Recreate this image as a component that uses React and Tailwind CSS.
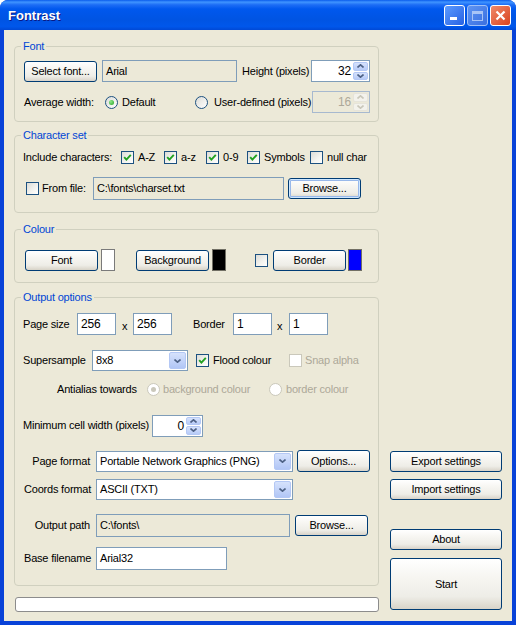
import React from "react";

const BTN =
  "flex items-center justify-center shrink-0 border border-[#003C74] rounded-[3px] bg-[linear-gradient(180deg,#FFFFFF_0%,#F7F6F2_35%,#EEEDE7_75%,#D8D3C8_100%)] text-black";

function Btn({ className = "", focus, children }) {
  return (
    <div className={`${BTN} ${focus ? "shadow-[inset_0_0_0_1px_#CEE7FF,inset_0_0_0_2px_#98B8EA]" : ""} ${className}`}>
      {children}
    </div>
  );
}

function Check({ on, disabled }) {
  return (
    <span
      className={
        disabled
          ? "w-[13px] h-[13px] shrink-0 border border-[#CAC8BB] bg-white"
          : "w-[13px] h-[13px] shrink-0 border border-[#1C5180] bg-[linear-gradient(135deg,#DCDCD7_0%,#F4F4F0_60%,#FFFFFF_100%)] flex items-center justify-center"
      }
    >
      {on && (
        <svg width="9" height="9" viewBox="0 0 9 9">
          <path d="M1.2 4.2 L3.4 6.6 L7.8 1.8" stroke="#21A121" strokeWidth="1.9" fill="none" />
        </svg>
      )}
    </span>
  );
}

function Radio({ on, disabled }) {
  return (
    <span
      className={
        disabled
          ? "w-[13px] h-[13px] shrink-0 rounded-full border border-[#CAC8BB] bg-white flex items-center justify-center"
          : "w-[13px] h-[13px] shrink-0 rounded-full border border-[#1C5180] bg-[linear-gradient(135deg,#DCDCD7_0%,#FFFFFF_100%)] flex items-center justify-center"
      }
    >
      {on && (
        <span
          className={
            disabled
              ? "w-[5px] h-[5px] rounded-full bg-[#CAC8BB]"
              : "w-[5px] h-[5px] rounded-full bg-[radial-gradient(circle_at_35%_35%,#8FE88B,#21A121)]"
          }
        />
      )}
    </span>
  );
}

function Arrow({ up, color = "#4D6185" }) {
  return (
    <svg width="7" height="4" viewBox="0 0 7 4">
      <path d={up ? "M0.5 3.5 L3.5 0.8 L6.5 3.5" : "M0.5 0.5 L3.5 3.2 L6.5 0.5"} stroke={color} strokeWidth="1.6" fill="none" />
    </svg>
  );
}

function Spin({ value, className = "", disabled }) {
  return (
    <div
      className={`h-[22px] shrink-0 border flex ${
        disabled ? "border-[#A7B9CF] bg-[#ECE9D8] text-[#ACA899]" : "border-[#7F9DB9] bg-white"
      } ${className}`}
    >
      <div className="flex-1 flex items-center justify-end pr-[2px] text-[12px]">{value}</div>
      <div className="w-[16px] flex flex-col gap-[1px] py-[1px] pr-[1px]">
        {[true, false].map((up) => (
          <div
            key={String(up)}
            className={
              disabled
                ? "flex-1 rounded-[2px] bg-[#F3F2EC] border border-[#E6E4DA] flex items-center justify-center"
                : "flex-1 rounded-[2px] bg-[linear-gradient(180deg,#D6E2FC,#B7CBF7)] border border-[#B4C8F5] flex items-center justify-center"
            }
          >
            <Arrow up={up} color={disabled ? "#C9C7BA" : "#4D6185"} />
          </div>
        ))}
      </div>
    </div>
  );
}

function Combo({ value, className = "" }) {
  return (
    <div className={`h-[21px] shrink-0 border border-[#7F9DB9] bg-white flex items-center ${className}`}>
      <span className="flex-1 pl-[3px]">{value}</span>
      <div className="w-[17px] h-[17px] mr-[1px] rounded-[2px] border border-[#B4C8F5] bg-[linear-gradient(180deg,#D6E2FC,#B1C6F6)] flex items-center justify-center">
        <Arrow />
      </div>
    </div>
  );
}

function Box({ children, className = "", grey }) {
  return (
    <div
      className={`shrink-0 border border-[#7F9DB9] flex items-center pl-[3px] ${
        grey ? "bg-[#ECE9D8]" : "bg-white"
      } ${className}`}
    >
      {children}
    </div>
  );
}

function Group({ title, className = "", children }) {
  return (
    <fieldset className={`border border-[#D0D0BF] rounded-[4px] ${className}`}>
      <legend className="ml-[6px] px-[2px] leading-[13px] text-[#0046D5]">{title}</legend>
      {children}
    </fieldset>
  );
}

function TitleBar() {
  return (
    <div className="h-[30px] shrink-0 flex items-center pl-[8px] pr-[5px] pt-[1px] tracking-normal bg-[linear-gradient(180deg,#0A5CEC_0%,#3F94FF_7%,#1D6DF5_16%,#0058EE_30%,#0054E3_65%,#0057EB_88%,#0049D6_100%)]">
      <span className="flex-1 text-white font-bold text-[13px] [text-shadow:1px_1px_0_#0A1883]">Fontrast</span>
      <div className="flex gap-[2px]">
        <div className="w-[21px] h-[21px] rounded-[3px] border border-white bg-[linear-gradient(135deg,#5B9BFF,#2761E3)] flex items-end pl-[5px] pb-[5px]">
          <span className="w-[7px] h-[3px] bg-white" />
        </div>
        <div className="w-[21px] h-[21px] rounded-[3px] border border-[#9FC0F8] bg-[linear-gradient(135deg,#5E94F2,#3A6FE0)] flex items-center justify-center">
          <span className="w-[11px] h-[10px] border border-[#A8C4F6] border-t-[3px]" />
        </div>
        <div className="w-[21px] h-[21px] rounded-[3px] border border-white bg-[linear-gradient(135deg,#F08A6A,#D8431F)] flex items-center justify-center">
          <svg width="11" height="11" viewBox="0 0 11 11">
            <path d="M1.5 1.5 L9.5 9.5 M9.5 1.5 L1.5 9.5" stroke="white" strokeWidth="2.2" />
          </svg>
        </div>
      </div>
    </div>
  );
}

export default function App() {
  return (
    <div className="w-[516px] h-[625px] flex flex-col bg-[#0842D8] rounded-t-[8px] overflow-hidden whitespace-nowrap font-['Liberation_Sans',Arial,sans-serif] text-[11px] tracking-[-0.2px] text-black">
      <TitleBar />
      <div className="flex-1 mx-[4px] mb-[4px] bg-[#ECE9D8] flex px-[10px]">
        <div className="w-[365px] flex flex-col">
          <Group title="Font" className="mt-[10px] pb-[8px]">
            <div className="pl-[9px] pt-[7px]">
              <div className="flex items-center h-[22px]">
                <Btn className="w-[73px] h-[21px]">Select font...</Btn>
                <Box grey className="ml-[5px] w-[135px] h-[22px]">Arial</Box>
                <span className="ml-[5px] w-[69px] shrink-0">Height (pixels)</span>
                <Spin value="32" className="w-[59px]" />
              </div>
              <div className="flex items-center h-[22px] mt-[9px]">
                <span className="w-[81px] shrink-0">Average width:</span>
                <Radio on />
                <span className="pl-[4px] w-[77px] shrink-0">Default</span>
                <Radio />
                <span className="pl-[6px] w-[104px] shrink-0">User-defined (pixels)</span>
                <Spin value="16" disabled className="w-[58px]" />
              </div>
            </div>
          </Group>

          <Group title="Character set" className="mt-[7px] pb-[12px]">
            <div className="pl-[9px] pt-[7px]">
              <div className="flex items-center h-[16px]">
                <span className="w-[98px] shrink-0 -ml-[1px]">Include characters:</span>
                <Check on />
                <span className="pl-[4px] w-[30px] shrink-0">A-Z</span>
                <Check on />
                <span className="pl-[4px] w-[29px] shrink-0">a-z</span>
                <Check on />
                <span className="pl-[4px] w-[28px] shrink-0">0-9</span>
                <Check on />
                <span className="pl-[4px] w-[50px] shrink-0">Symbols</span>
                <Check />
                <span className="pl-[4px]">null char</span>
              </div>
              <div className="flex items-center h-[23px] mt-[12px]">
                <span className="ml-[2px]">
                  <Check />
                </span>
                <span className="pl-[3px] w-[54px] shrink-0">From file:</span>
                <Box grey className="w-[191px] h-[23px]">C:\fonts\charset.txt</Box>
                <Btn focus className="ml-[4px] w-[73px] h-[21px]">Browse...</Btn>
              </div>
            </div>
          </Group>

          <Group title="Colour" className="mt-[10px] pb-[11px]">
            <div className="pl-[10px] pt-[13px] flex items-center h-[35px]">
              <Btn className="w-[73px] h-[21px]">Font</Btn>
              <span className="ml-[3px] w-[14px] h-[22px] border border-[#7A7A7A] bg-white" />
              <Btn className="ml-[21px] w-[73px] h-[21px]">Background</Btn>
              <span className="ml-[3px] w-[14px] h-[22px] border border-[#716F64] bg-black" />
              <span className="ml-[29px]">
                <Check />
              </span>
              <Btn className="ml-[5px] w-[73px] h-[21px]">Border</Btn>
              <span className="ml-[2px] w-[14px] h-[22px] border border-[#716F64] bg-[#0000FF]" />
            </div>
          </Group>

          <Group title="Output options" className="mt-[8px] pb-[15px]">
            <div className="pl-[9px] pt-[9px]">
              <div className="flex items-center h-[22px]">
                <span className="w-[54px] shrink-0 -ml-[1px]">Page size</span>
                <Box className="w-[39px] h-[22px] text-[12px]">256</Box>
                <span className="w-[17px] shrink-0 pl-[6px] pt-[4px]">x</span>
                <Box className="w-[39px] h-[22px] text-[12px]">256</Box>
                <span className="ml-[21px] w-[40px] shrink-0">Border</span>
                <Box className="w-[39px] h-[22px] text-[12px]">1</Box>
                <span className="w-[17px] shrink-0 pl-[5px] pt-[4px]">x</span>
                <Box className="w-[39px] h-[22px] text-[12px]">1</Box>
              </div>
              <div className="flex items-center h-[21px] mt-[15px]">
                <span className="w-[69px] shrink-0 -ml-[1px]">Supersample</span>
                <Combo value="8x8" className="w-[96px]" />
                <span className="ml-[8px]">
                  <Check on />
                </span>
                <span className="pl-[4px] w-[80px] shrink-0">Flood colour</span>
                <Check disabled />
                <span className="pl-[3px] text-[#ACA899]">Snap alpha</span>
              </div>
              <div className="flex items-center h-[16px] mt-[10px] pl-[33px]">
                <span className="w-[90px] shrink-0">Antialias towards</span>
                <Radio on disabled />
                <span className="pl-[3px] w-[109px] shrink-0 text-[#ACA899]">background colour</span>
                <Radio disabled />
                <span className="pl-[4px] text-[#ACA899]">border colour</span>
              </div>
              <div className="flex items-center h-[21px] mt-[18px]">
                <span className="w-[129px] shrink-0 -ml-[1px]">Minimum cell width (pixels)</span>
                <Spin value="0" className="w-[51px] h-[21px]" />
              </div>
              <div className="flex items-center h-[22px] mt-[14px]">
                <span className="w-[66px] shrink-0 text-right">Page format</span>
                <Combo value="Portable Network Graphics (PNG)" className="ml-[6px] w-[197px]" />
                <Btn className="ml-[4px] w-[73px] h-[22px]">Options...</Btn>
              </div>
              <div className="flex items-center h-[21px] mt-[7px]">
                <span className="w-[66px] shrink-0 text-right">Coords format</span>
                <Combo value="ASCII (TXT)" className="ml-[6px] w-[197px]" />
              </div>
              <div className="flex items-center h-[23px] mt-[14px]">
                <span className="w-[66px] shrink-0 text-right">Output path</span>
                <Box grey className="ml-[6px] w-[194px] h-[23px]">C:\fonts\</Box>
                <Btn className="ml-[5px] w-[73px] h-[21px]">Browse...</Btn>
              </div>
              <div className="flex items-center h-[23px] mt-[10px]">
                <span className="w-[66px] shrink-0 text-right">Base filename</span>
                <Box className="ml-[6px] w-[131px] h-[23px]">Arial32</Box>
              </div>
            </div>
          </Group>

          <div className="mt-[11px] h-[15px] ml-[1px] border border-[#8C8C8C] rounded-[3px] bg-white" />
        </div>

        <div className="w-[112px] ml-[11px] flex flex-col justify-end pb-[11px]">
          <Btn className="w-[112px] h-[21px]">Export settings</Btn>
          <Btn className="mt-[7px] w-[112px] h-[21px]">Import settings</Btn>
          <Btn className="mt-[29px] w-[112px] h-[21px]">About</Btn>
          <Btn className="mt-[8px] w-[112px] h-[52px]">Start</Btn>
        </div>
      </div>
    </div>
  );
}
